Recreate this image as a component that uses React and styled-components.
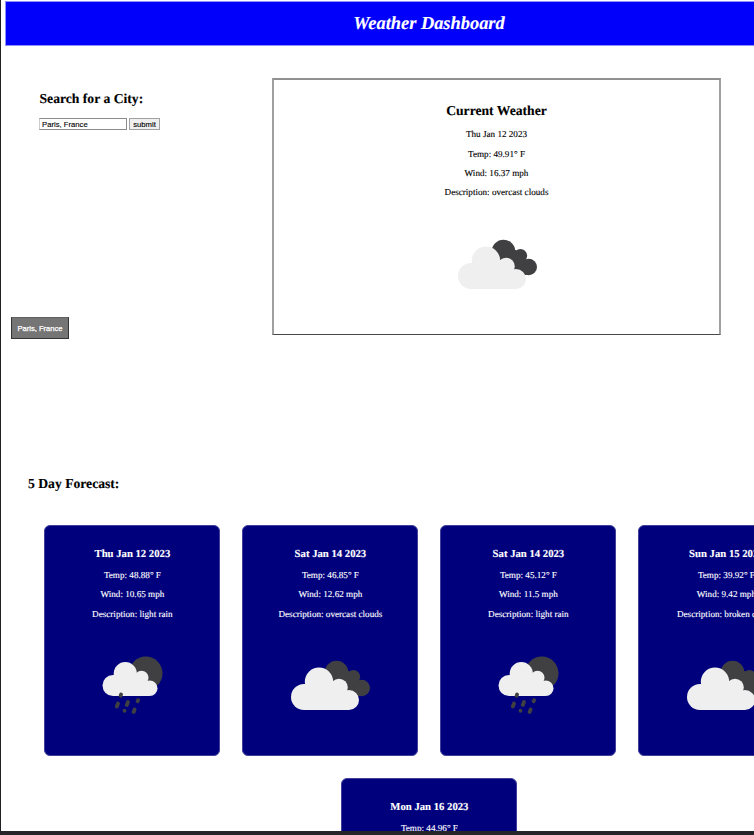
import React from "react";
import styled, { createGlobalStyle } from "styled-components";

const GlobalStyle = createGlobalStyle`
  *, *::before, *::after { box-sizing: border-box; }
  body { margin: 0; background: #fff; overflow: hidden; }
`;

const Frame = styled.div`
  width: 754px;
  height: 835px;
  overflow: hidden;
  border-left: 1px solid #202024;
  border-bottom: 4px solid #25252a;
  background: #fff;
  color: #000;
  font-family: "Liberation Serif", "Times New Roman", serif;
  font-size: 9.15px;
  text-rendering: geometricPrecision;
  -webkit-text-stroke: 0.12px currentColor;
`;

const Page = styled.div`
  width: 856px;
  padding: 1px 4px 0;
`;

const Header = styled.header`
  height: 45px;
  border: 1px solid #9090f8;
  background: #0000fb;
  text-align: center;
`;

const Title = styled.h1`
  margin: 0;
  line-height: 42px;
  font-size: 18.4px;
  font-style: italic;
  color: #fff;
`;

const Top = styled.main`
  display: flex;
  height: 427px;
  padding: 32px 0 0 6px;
`;

const Side = styled.aside`
  width: 261px;
  flex: none;
  display: flex;
  flex-direction: column;
  align-items: flex-start;
`;

const Heading = styled.h2`
  margin: 0;
  font-size: 13.65px;
  line-height: 16px;
`;

const Search = styled.form`
  height: 239px;
  padding: 13px 0 0 28.5px;
`;

const Fields = styled.div`
  display: flex;
  gap: 2px;
  margin: 11px 0 0 -0.5px;
`;

const Input = styled.input`
  width: 88px;
  height: 12px;
  padding: 0 2px;
  border: 1px solid #8b8b8b;
  border-left-color: #ccc;
  border-radius: 0;
  font: 7.7px "Liberation Sans", Arial, sans-serif;
  color: #000;
  outline: none;
`;

const Submit = styled.button`
  width: 31px;
  height: 12px;
  padding: 0;
  border: 1px solid #a2a2a2;
  border-radius: 0;
  background: #efefef;
  font: 7.7px/11px "Liberation Sans", Arial, sans-serif;
  color: #000;
`;

const HistoryButton = styled.button`
  width: 58px;
  height: 22px;
  padding: 0;
  border: 1px solid #333;
  border-top: 1px solid #606060;
  border-radius: 0;
  background: #757575;
  font: 7.6px/21px "Liberation Sans", Arial, sans-serif;
  color: #fff;
  -webkit-text-stroke: 0.25px #fff;
`;

const Current = styled.section`
  width: 449px;
  height: 257px;
  padding-top: 23px;
  border: 2px solid #a0a0a0;
  border-top: 2px solid #909090;
  border-bottom: 1px solid #484848;
  text-align: center;
`;

const Line = styled.p`
  margin: 0;
  height: 19.4px;
  line-height: 12px;
  white-space: nowrap;
`;

const Details = styled.div`
  margin-top: ${(p) => p.$gap}px;
`;

const ForecastHeading = styled(Heading)`
  margin: 0 0 0 23px;
  padding-top: 3px;
`;

const Cards = styled.section`
  display: flex;
  flex-wrap: wrap;
  justify-content: center;
  gap: 22px;
  margin-top: 33px;
  padding-left: 0.8px;
`;

const Card = styled.article`
  width: 176px;
  height: 231px;
  padding-top: 21px;
  border: 1px solid #40409c;
  border-radius: 6px;
  background: #00007d;
  color: #fff;
  text-align: center;
`;

const CardDate = styled.h3`
  margin: 0;
  font-size: 10.7px;
  line-height: 14px;
`;

const Icon = styled.svg`
  display: block;
  width: 110px;
  height: 90px;
  margin: ${(p) => p.$top}px auto 0;
`;

function CloudIcon({ top }) {
  return (
    <Icon $top={top} viewBox="0 0 110 90">
      <g fill="#404042">
        <circle cx="61.5" cy="32.5" r="11.8" />
        <circle cx="78.4" cy="36.8" r="6.8" />
        <circle cx="86.7" cy="48" r="8.3" />
        <path d="M62 31h12l5 6 6 11v8H70L55 40Z" />
      </g>
      <g fill="#efefef">
        <circle cx="29" cy="57" r="13" />
        <circle cx="44" cy="41.7" r="14.2" />
        <circle cx="64" cy="47.5" r="8.8" />
        <circle cx="74" cy="60" r="10" />
        <path d="M29 44h6l20-1 13 5 6 12v10H29Z" />
      </g>
    </Icon>
  );
}

function RainIcon({ top }) {
  return (
    <Icon $top={top} viewBox="0 0 110 90">
      <circle cx="68.8" cy="33.3" r="16.7" fill="#404042" />
      <g fill="#efefef">
        <circle cx="36" cy="45.5" r="10.5" />
        <circle cx="48.3" cy="33.6" r="11.6" />
        <circle cx="64.5" cy="37.8" r="7" />
        <circle cx="72.7" cy="48.2" r="7.8" />
        <path d="M36 35h4l18 0 8 3 6 10v8H36Z" />
      </g>
      <g stroke="#404042" strokeWidth="3.8" strokeLinecap="round">
        <path d="m44.1 54.4-.5 1.3M41 63.5l-1.2 2.9M51 62l-1.2 2.9M61.1 60.2l-.5 1.1M47.5 70.7v.1M57.6 69.5l-1 2.4" />
      </g>
    </Icon>
  );
}

const days = [
  ["Thu Jan 12 2023", "48.88", "10.65", "light rain"],
  ["Sat Jan 14 2023", "46.85", "12.62", "overcast clouds"],
  ["Sat Jan 14 2023", "45.12", "11.5", "light rain"],
  ["Sun Jan 15 2023", "39.92", "9.42", "broken clouds"],
  ["Mon Jan 16 2023", "44.96", "8.1", "overcast clouds"],
];

function ForecastCard({ day: [date, temp, wind, description] }) {
  const Weather = description.includes("rain") ? RainIcon : CloudIcon;
  return (
    <Card>
      <CardDate>{date}</CardDate>
      <Details $gap={8}>
        <Line>Temp: {temp}° F</Line>
        <Line>Wind: {wind} mph</Line>
        <Line>Description: {description}</Line>
      </Details>
      <Weather top={13} />
    </Card>
  );
}

export default function App() {
  return (
    <Frame>
      <GlobalStyle />
      <Page>
        <Header>
          <Title>Weather Dashboard</Title>
        </Header>
        <Top>
          <Side>
            <Search onSubmit={(e) => e.preventDefault()}>
              <Heading>Search for a City:</Heading>
              <Fields>
                <Input defaultValue="Paris, France" aria-label="City" />
                <Submit type="submit">submit</Submit>
              </Fields>
            </Search>
            <HistoryButton>Paris, France</HistoryButton>
          </Side>
          <Current>
            <Heading>Current Weather</Heading>
            <Details $gap={9.3}>
              <Line>Thu Jan 12 2023</Line>
              <Line>Temp: 49.91° F</Line>
              <Line>Wind: 16.37 mph</Line>
              <Line>Description: overcast clouds</Line>
            </Details>
            <CloudIcon top={12.7} />
          </Current>
        </Top>
        <ForecastHeading>5 Day Forecast:</ForecastHeading>
        <Cards>
          {days.map((day, i) => (
            <ForecastCard key={i} day={day} />
          ))}
        </Cards>
      </Page>
    </Frame>
  );
}
